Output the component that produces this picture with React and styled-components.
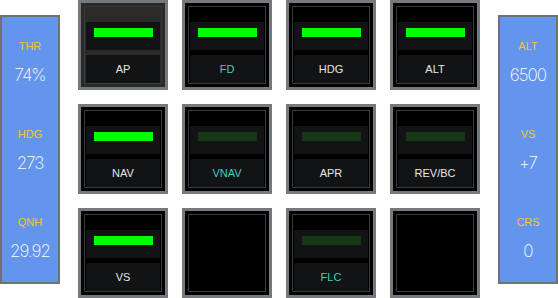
import React from "react";
import styled, { createGlobalStyle, css } from "styled-components";

const GlobalStyle = createGlobalStyle`
  html, body {
    margin: 0;
    padding: 0;
    background: #ffffff;
  }
  body {
    font-family: "Liberation Sans", Arial, sans-serif;
  }
`;

const leftReadouts = [
  { label: "THR", value: "74%" },
  { label: "HDG", value: "273" },
  { label: "QNH", value: "29.92" },
];

const rightReadouts = [
  { label: "ALT", value: "6500" },
  { label: "VS", value: "+7" },
  { label: "CRS", value: "0" },
];

// state: "on" bright bar, "off" dim bar, null = blank key
const keys = [
  { name: "AP", state: "on", pressed: true },
  { name: "FD", state: "on", armed: true },
  { name: "HDG", state: "on" },
  { name: "ALT", state: "on" },
  { name: "NAV", state: "on" },
  { name: "VNAV", state: "off", armed: true },
  { name: "APR", state: "off" },
  { name: "REV/BC", state: "off" },
  { name: "VS", state: "on" },
  { name: "", state: null },
  { name: "FLC", state: "off", armed: true },
  { name: "", state: null },
];

export default function App() {
  return (
    <>
      <GlobalStyle />
      <Screen>
        <Readouts items={leftReadouts} />
        <KeyGrid>
          {keys.map((k, i) => (
            <Key key={i} $pressed={k.pressed}>
              <KeyInner>
                {k.state && (
                  <>
                    <LampPanel>
                      <Lamp $on={k.state === "on"} />
                    </LampPanel>
                    <LabelPanel $armed={k.armed}>{k.name}</LabelPanel>
                  </>
                )}
              </KeyInner>
            </Key>
          ))}
        </KeyGrid>
        <Readouts items={rightReadouts} />
      </Screen>
    </>
  );
}

function Readouts({ items }) {
  return (
    <SidePanel>
      {items.map((r) => (
        <Readout key={r.label}>
          <ReadoutLabel>{r.label}</ReadoutLabel>
          <ReadoutValue>{r.value}</ReadoutValue>
        </Readout>
      ))}
    </SidePanel>
  );
}

const Screen = styled.div`
  width: 558px;
  height: 298px;
  display: flex;
  align-items: center;
  gap: 18px;
  overflow: hidden;
`;

const SidePanel = styled.div`
  box-sizing: border-box;
  width: 60px;
  height: 269px;
  background: #6495ed;
  border: 2px solid #707173;
  display: flex;
  flex-direction: column;
`;

const Readout = styled.div`
  flex: 1;
  display: flex;
  flex-direction: column;
  align-items: center;
  justify-content: center;
  gap: 15px;
  padding-top: 2px;
`;

const ReadoutLabel = styled.span`
  font-family: "Liberation Sans", Arial, sans-serif;
  font-size: 11px;
  line-height: 12px;
  color: #ecca2c;
`;

const ReadoutValue = styled.span`
  font-family: Inter, "DejaVu Sans", sans-serif;
  font-weight: 200;
  font-size: 17px;
  line-height: 17px;
  color: #ffffff;
  letter-spacing: -1px;
`;

const KeyGrid = styled.div`
  display: grid;
  grid-template-columns: repeat(4, 90px);
  grid-auto-rows: 90px;
  gap: 14px;
`;

const Key = styled.div`
  box-sizing: border-box;
  border: 3px solid #75797c;
  background: #000000;
  padding: 3px;
  ${(p) =>
    p.$pressed &&
    css`
      background: #2a2a2a;
    `}
`;

const KeyInner = styled.div`
  box-sizing: border-box;
  height: 100%;
  border: 1px solid #3a3b3d;
  padding: 15px 1px 0;
  display: flex;
  flex-direction: column;
  gap: 5px;
`;

const LampPanel = styled.div`
  height: 28px;
  background: #121315;
  display: flex;
  justify-content: center;
  padding-top: 6px;
  box-sizing: border-box;
`;

const Lamp = styled.div`
  width: 59px;
  height: 9px;
  background: ${(p) => (p.$on ? "#00ff00" : "#163816")};
`;

const LabelPanel = styled.div`
  height: 28px;
  background: #121315;
  display: flex;
  align-items: center;
  justify-content: center;
  font-size: 11px;
  color: ${(p) => (p.$armed ? "#3fd0c0" : "#e6e6e6")};
`;
